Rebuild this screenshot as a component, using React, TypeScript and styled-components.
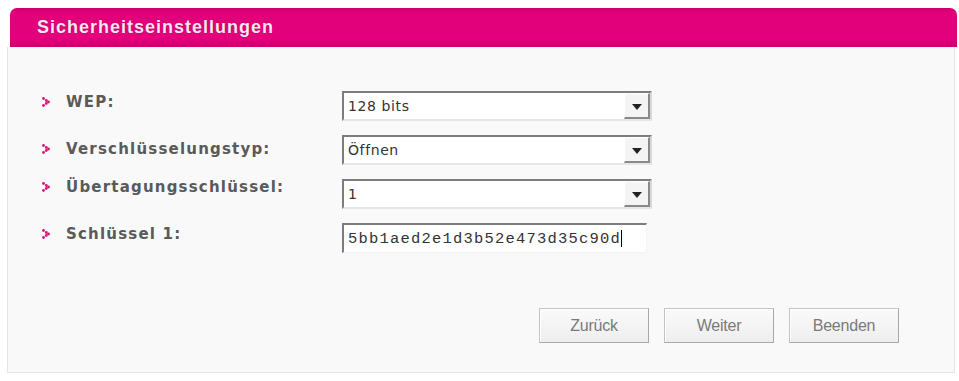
import React from "react";
import styled, { createGlobalStyle } from "styled-components";

const Global = createGlobalStyle`
  html, body { margin: 0; padding: 0; background: #ffffff; }
  body { font-family: "DejaVu Sans", Verdana, sans-serif; }
`;

const Page = styled.div`
  width: 959px;
  height: 381px;
  padding: 8px 4px 0 7px;
  box-sizing: border-box;
`;

const Header = styled.div`
  height: 39px;
  margin-left: 3px;
  margin-right: -2px;
  border-radius: 7px 7px 0 0;
  background: linear-gradient(#c8006a 0px, #e2007a 4px, #e4007c 30px, #cc0070 39px);
  display: flex;
  align-items: center;
  padding-left: 27px;
  box-sizing: border-box;
`;

const Title = styled.h1`
  margin: 0;
  font-family: "Liberation Sans", Arial, sans-serif;
  font-weight: bold;
  font-size: 18px;
  letter-spacing: 1px;
  color: #fbe6f1;
  text-shadow: 0 0 1px #8a0045;
`;

const Body = styled.div`
  background: #f9f9f9;
  border: 1px solid #e4e4e4;
  border-top: none;
  height: 326px;
  box-sizing: border-box;
  padding: 44px 55px 0 34px;
  display: flex;
  flex-direction: column;
`;

const Form = styled.div`
  display: grid;
  grid-template-columns: 300px 310px;
  row-gap: 14px;
`;

const Label = styled.div<{ $shift: number }>`
  display: flex;
  align-items: center;
  gap: 16px;
  height: 16px;
  margin-top: ${(p) => p.$shift}px;
  font-family: "DejaVu Sans", Verdana, sans-serif;
  font-weight: bold;
  font-size: 15px;
  color: #5a5a5a;
  letter-spacing: 1.2px;
`;

const Bullet = () => (
  <svg width="8" height="10" viewBox="0 0 8 10">
    <g fill="#d4157a">
      <circle cx="1.5" cy="1.5" r="1.4" />
      <circle cx="4.3" cy="3.5" r="1.4" />
      <circle cx="6.5" cy="5" r="1.4" />
      <circle cx="4.3" cy="6.5" r="1.4" />
      <circle cx="1.5" cy="8.5" r="1.4" />
    </g>
  </svg>
);

const SelectBox = styled.div`
  height: 30px;
  box-sizing: border-box;
  background: #ffffff;
  border-top: 2px solid #7d7d7d;
  border-left: 2px solid #7d7d7d;
  border-right: 2px solid #d8d8d8;
  border-bottom: 2px solid #e6e6e6;
  display: flex;
  align-items: stretch;
`;

const Value = styled.div`
  flex: 1;
  display: flex;
  align-items: center;
  padding-left: 4px;
  font-family: "DejaVu Sans", Tahoma, sans-serif;
  font-size: 14px;
  color: #333;
  letter-spacing: 0.6px;
`;

const Arrow = styled.div`
  width: 26px;
  box-sizing: border-box;
  background: #f4f4f4;
  border-top: 1px solid #ffffff;
  border-left: 1px solid #ffffff;
  border-right: 2px solid #8a8a8a;
  border-bottom: 2px solid #8a8a8a;
  display: flex;
  align-items: center;
  justify-content: center;
  &::after {
    content: "";
    border-left: 5px solid transparent;
    border-right: 5px solid transparent;
    border-top: 6px solid #222;
    margin-top: 2px;
  }
`;

const InputBox = styled.div`
  height: 30px;
  width: 305px;
  box-sizing: border-box;
  background: #ffffff;
  border-top: 2px solid #7d7d7d;
  border-left: 2px solid #7d7d7d;
  border-right: 1px solid #f4f4f4;
  border-bottom: 1px solid #f4f4f4;
  display: flex;
  align-items: center;
  padding-left: 4px;
  font-family: "Liberation Mono", "DejaVu Sans Mono", monospace;
  font-size: 15.5px;
  letter-spacing: 1.2px;
  color: #333;
`;

const Caret = styled.span`
  display: inline-block;
  width: 1px;
  height: 17px;
  background: #000;
  margin-left: 0px;
`;

const Buttons = styled.div`
  margin-top: 55px;
  display: flex;
  justify-content: flex-end;
  gap: 15px;
`;

const Button = styled.button`
  width: 110px;
  height: 35px;
  box-sizing: border-box;
  background: linear-gradient(#fafafa, #eeeeee);
  border: 1px solid #c4c4c4;
  border-right-color: #a8a8a8;
  border-bottom-color: #a8a8a8;
  box-shadow: inset 1px 1px 0 #ffffff;
  font-family: "Liberation Sans", Arial, sans-serif;
  font-size: 16px;
  color: #7a7a7a;
  letter-spacing: -0.2px;
  padding: 0;
`;

const rows: { label: string; value: string; kind: "select" | "input"; shift: number }[] = [
  { label: "WEP:", value: "128 bits", kind: "select", shift: 3 },
  { label: "Verschlüsselungstyp:", value: "Öffnen", kind: "select", shift: 6 },
  { label: "Übertagungsschlüssel:", value: "1", kind: "select", shift: 0 },
  { label: "Schlüssel 1:", value: "5bb1aed2e1d3b52e473d35c90d", kind: "input", shift: 3 },
];

export default function App() {
  return (
    <>
      <Global />
      <Page>
        <Header>
          <Title>Sicherheitseinstellungen</Title>
        </Header>
        <Body>
          <Form>
            {rows.map((r) => (
              <React.Fragment key={r.label}>
                <Label $shift={r.shift}>
                  <Bullet />
                  <span>{r.label}</span>
                </Label>
                {r.kind === "select" ? (
                  <SelectBox>
                    <Value>{r.value}</Value>
                    <Arrow />
                  </SelectBox>
                ) : (
                  <InputBox>
                    {r.value}
                    <Caret />
                  </InputBox>
                )}
              </React.Fragment>
            ))}
          </Form>
          <Buttons>
            <Button>Zurück</Button>
            <Button>Weiter</Button>
            <Button>Beenden</Button>
          </Buttons>
        </Body>
      </Page>
    </>
  );
}
